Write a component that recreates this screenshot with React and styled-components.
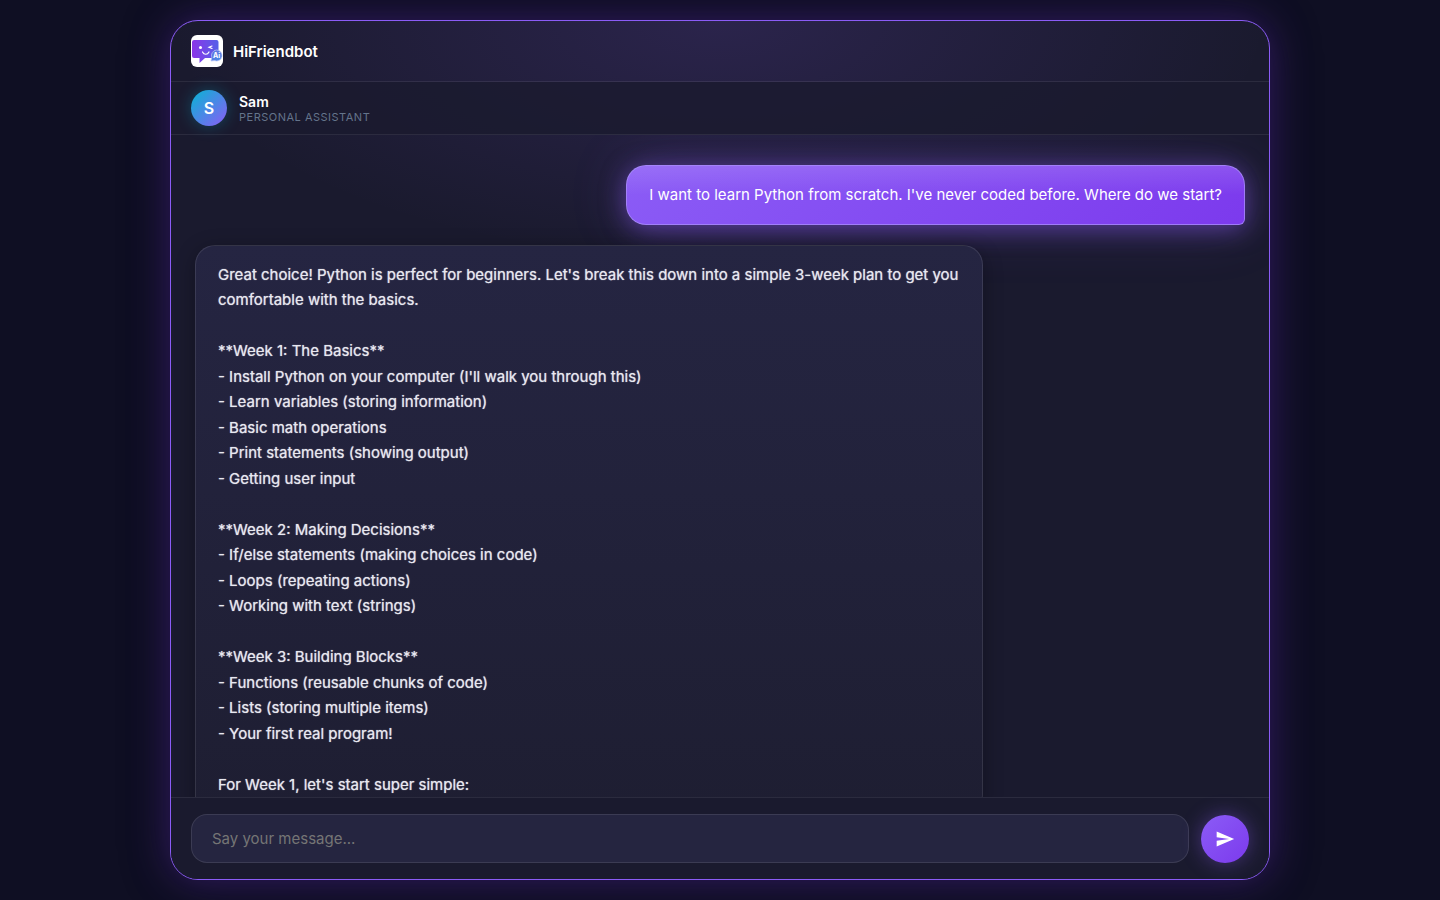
import React, { useState } from 'react';
import styled, { createGlobalStyle } from 'styled-components';

const GlobalStyle = createGlobalStyle`
  * {
    box-sizing: border-box;
  }

  body {
    margin: 0;
    background: #0f0f23;
    color: #fff;
    font-family: Inter, 'Liberation Sans', sans-serif;
  }

  button,
  input {
    font-family: inherit;
  }
`;

const Page = styled.div`
  display: flex;
  justify-content: center;
  height: 100vh;
  padding: 20px;
  overflow: hidden;
  background: #0f0f23;
`;

const ChatCard = styled.main`
  display: flex;
  flex-direction: column;
  width: 100%;
  max-width: 1100px;
  overflow: hidden;
  border: 1px solid #8b5cf6;
  border-radius: 28px;
  background:
    radial-gradient(ellipse 50% 28% at 50% 0%, rgba(139, 92, 246, 0.15), transparent),
    #1a1a2e;
  box-shadow:
    0 0 40px rgba(124, 58, 237, 0.36),
    0 0 50px rgba(0, 0, 0, 0.35);
`;

const Header = styled.header`
  display: flex;
  align-items: center;
  gap: 10px;
  padding: 14px 20px;
  border-bottom: 1px solid rgba(255, 255, 255, 0.08);
`;

const Brand = styled.h1`
  margin: 0;
  font-size: 15px;
  font-weight: 600;
  line-height: 19px;
`;

const PersonaBar = styled.div`
  display: flex;
  align-items: center;
  gap: 12px;
  padding: 8px 20px;
  border-bottom: 1px solid rgba(255, 255, 255, 0.08);
  background: rgba(26, 26, 46, 0.8);
`;

const Avatar = styled.div`
  display: flex;
  align-items: center;
  justify-content: center;
  width: 36px;
  height: 36px;
  border-radius: 50%;
  background: linear-gradient(135deg, #06b6d4, #8b5cf6);
  box-shadow: 0 0 16px rgba(6, 182, 212, 0.3);
  font-size: 16px;
  font-weight: 600;
`;

const PersonaName = styled.div`
  font-size: 14px;
  font-weight: 600;
  line-height: 17px;
`;

const PersonaRole = styled.div`
  color: #64748b;
  font-size: 11px;
  line-height: 14px;
  letter-spacing: 0.5px;
  text-transform: uppercase;
`;

const Messages = styled.section`
  display: flex;
  flex: 1;
  flex-direction: column;
  gap: 20px;
  min-height: 0;
  padding: 30px 24px;
  overflow: hidden;
`;

const Bubble = styled.div`
  flex-shrink: 0;
  max-width: 75%;
  padding: 16px 22px;
  border: 1px solid;
  font-size: 15px;
  line-height: 1.7;
  white-space: pre-wrap;
`;

const UserBubble = styled(Bubble)`
  align-self: flex-end;
  border-color: rgba(167, 139, 250, 0.8);
  border-radius: 20px 20px 6px 20px;
  background:
    linear-gradient(180deg, rgba(255, 255, 255, 0.12), transparent 50%),
    linear-gradient(135deg, #8b5cf6, #7c3aed);
  background-origin: border-box;
  box-shadow:
    0 4px 24px rgba(139, 92, 246, 0.5),
    0 0 60px rgba(139, 92, 246, 0.2);
`;

const BotBubble = styled(Bubble)`
  align-self: flex-start;
  border-color: rgba(255, 255, 255, 0.1);
  border-radius: 20px 20px 20px 6px;
  background: linear-gradient(180deg, #252542, #1e1e32);
  box-shadow: 0 4px 20px rgba(0, 0, 0, 0.3);
  color: #e8e8f0;
  text-shadow: 0 0 1px rgba(232, 232, 240, 0.8);
`;

const Composer = styled.form`
  display: flex;
  align-items: center;
  gap: 12px;
  padding: 16px 20px;
  border-top: 1px solid rgba(255, 255, 255, 0.08);
  background: #1a1a2e;
`;

const MessageInput = styled.input`
  flex: 1;
  min-width: 0;
  height: 49px;
  padding: 0 20px;
  border: 1px solid rgba(255, 255, 255, 0.1);
  border-radius: 16px;
  outline: none;
  background: #252540;
  color: #fff;
  font-size: 15px;

  &::placeholder {
    color: #757575;
  }
`;

const SendButton = styled.button`
  display: flex;
  align-items: center;
  justify-content: center;
  width: 48px;
  height: 48px;
  padding: 0;
  border: 0;
  border-radius: 50%;
  background: linear-gradient(135deg, #8b5cf6, #7c3aed);
  box-shadow: 0 0 20px rgba(139, 92, 246, 0.4);
  color: #fff;
  cursor: pointer;
`;

const reply = `Great choice! Python is perfect for beginners. Let's break this down into a simple 3-week plan to get you comfortable with the basics.

**Week 1: The Basics**
- Install Python on your computer (I'll walk you through this)
- Learn variables (storing information)
- Basic math operations
- Print statements (showing output)
- Getting user input

**Week 2: Making Decisions**
- If/else statements (making choices in code)
- Loops (repeating actions)
- Working with text (strings)

**Week 3: Building Blocks**
- Functions (reusable chunks of code)
- Lists (storing multiple items)
- Your first real program!

For Week 1, let's start super simple:`;

const Logo = () => (
  <svg width="32" height="32" viewBox="0 0 32 32" aria-hidden="true">
    <defs>
      <linearGradient id="logo-body" x1="0" y1="0" x2="1" y2="0">
        <stop offset="0" stopColor="#8b35e8" />
        <stop offset="1" stopColor="#5560e8" />
      </linearGradient>
      <linearGradient id="logo-badge" x1="0" y1="0" x2="1" y2="1">
        <stop offset="0" stopColor="#6a6ee0" />
        <stop offset="1" stopColor="#3f8ee8" />
      </linearGradient>
    </defs>
    <rect width="32" height="32" rx="6" fill="#fff" />
    <path
      d="M3 5h22.500a2 2 0 0 1 2 2v14a2 2 0 0 1-2 2H14l-5.500 5v-5H3a2 2 0 0 1-2-2V7a2 2 0 0 1 2-2z"
      fill="url(#logo-body)"
    />
    <circle cx="9.500" cy="12.500" r="1.500" fill="#fff" />
    <path
      d="M21 11l-3 1.200 3 1.300M11.500 17c1.500 3 5 3 6.500 0"
      fill="none"
      stroke="#fff"
      strokeWidth="1.200"
      strokeLinecap="round"
    />
    <path
      d="M25.500 15a5.500 5.500 0 1 1-2 10.600L20 26l.8-3.500A5.500 5.500 0 0 1 25.500 15z"
      fill="url(#logo-badge)"
      stroke="#b9c4f7"
      strokeWidth="0.700"
    />
    <text x="22" y="23" fill="#fff" fontSize="7" fontWeight="700">
      Ai
    </text>
  </svg>
);

const App = () => {
  const [message, setMessage] = useState('');

  return (
    <Page>
      <GlobalStyle />
      <ChatCard>
        <Header>
          <Logo />
          <Brand>HiFriendbot</Brand>
        </Header>
        <PersonaBar>
          <Avatar>S</Avatar>
          <div>
            <PersonaName>Sam</PersonaName>
            <PersonaRole>Personal Assistant</PersonaRole>
          </div>
        </PersonaBar>
        <Messages>
          <UserBubble>
            I want to learn Python from scratch. I've never coded before. Where do we start?
          </UserBubble>
          <BotBubble>{reply}</BotBubble>
        </Messages>
        <Composer onSubmit={event => event.preventDefault()}>
          <MessageInput
            type="text"
            aria-label="Message"
            placeholder="Say your message..."
            value={message}
            onChange={event => setMessage(event.target.value)}
          />
          <SendButton type="submit" aria-label="Send">
            <svg width="20" height="20" viewBox="0 0 24 24" fill="currentColor">
              <path d="M2.010 21L23 12 2.010 3 2 10l15 2-15 2z" />
            </svg>
          </SendButton>
        </Composer>
      </ChatCard>
    </Page>
  );
};

export default App;
